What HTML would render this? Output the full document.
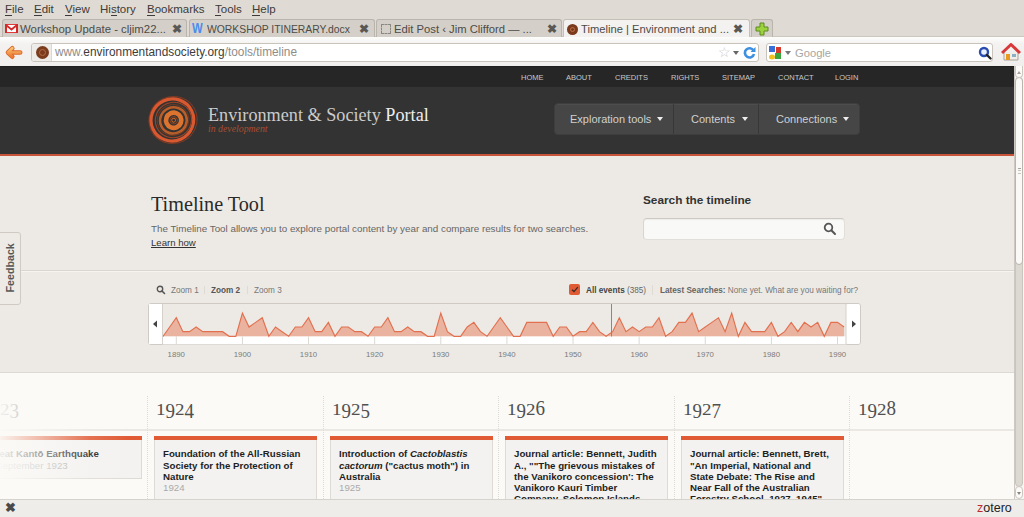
<!DOCTYPE html>
<html><head><meta charset="utf-8">
<style>
*{margin:0;padding:0;box-sizing:border-box}
html,body{width:1024px;height:517px;overflow:hidden;background:#f0efed;font-family:"Liberation Sans",sans-serif}
.a{position:absolute}
.t{position:absolute;white-space:nowrap;line-height:1}
/* chrome */
#menubar{left:0;top:0;width:1024px;height:20px;background:#e0dad4}
#menubar span{position:absolute;top:3px;font-size:11.5px;color:#3c3b37}
#menubar u{text-decoration:none;border-bottom:1px solid #3c3b37}
#tabbar{left:0;top:20px;width:1024px;height:17px;background:#e0dad4}
.tab{position:absolute;top:19px;height:18px;background:#d4d0c9;border:1px solid #b9b4ac;border-bottom:none;border-radius:3px 3px 0 0}
.tab.act{background:#f3f2f0;height:19px;border-color:#c4bfb7}
.tab .lbl{position:absolute;left:17px;top:3px;font-size:11px;color:#4c4b47;white-space:nowrap}
.tab .x{position:absolute;top:2px;font-size:12px;color:#5a5855;font-weight:bold}
#navbar{left:0;top:37px;width:1024px;height:29px;background:linear-gradient(#fbfbfa 0px,#f3f2f0 6px,#f0efed 29px);border-top:1px solid #fcfcfb}
</style></head><body>
<div id="menubar" class="a">
 <span style="left:5px"><u>F</u>ile</span>
 <span style="left:34px"><u>E</u>dit</span>
 <span style="left:65px"><u>V</u>iew</span>
 <span style="left:100px">Hi<u>s</u>tory</span>
 <span style="left:147px"><u>B</u>ookmarks</span>
 <span style="left:215px"><u>T</u>ools</span>
 <span style="left:252px"><u>H</u>elp</span>
</div>

<div id="tabbar" class="a"><div class="a" style="left:0;top:16px;width:1024px;height:1px;background:#ccc7bf"></div></div>
<!-- tab1 -->
<div class="tab" style="left:2px;width:185px">
 <svg class="a" style="left:2px;top:4px" width="13" height="9" viewBox="0 0 13 9"><rect x="0.5" y="0.5" width="12" height="8" fill="#fff" stroke="#e03a3a"/><path d="M1 1 L6.5 5.5 L12 1" fill="none" stroke="#d42a2a" stroke-width="1.8"/><rect x="0" y="0" width="2" height="9" fill="#d42a2a"/><rect x="11" y="0" width="2" height="9" fill="#d42a2a"/></svg>
 <span class="lbl" style="font-size:11.4px">Workshop Update - cljim22...</span><span class="x" style="left:169px">&#10006;</span>
</div>
<div class="tab" style="left:189px;width:186px">
 <span class="a" style="left:2px;top:1px;font:bold 14.5px/1 'Liberation Sans',sans-serif;color:#4a8cf0;transform:scaleX(0.78);transform-origin:left">W</span>
 <span class="lbl" style="transform:scaleX(0.943);transform-origin:left">WORKSHOP ITINERARY.docx</span><span class="x" style="left:169px">&#10006;</span>
</div>
<div class="tab" style="left:376px;width:186px">
 <div class="a" style="left:4px;top:4px;width:10px;height:10px;border:1px dashed #8a8680;border-radius:1px"></div>
 <span class="lbl" style="font-size:11.25px">Edit Post &#8249; Jim Clifford &#8212; ...</span><span class="x" style="left:170px">&#10006;</span>
</div>
<div class="tab act" style="left:563px;width:187px">
 <div class="a" style="left:3px;top:4px;width:11px;height:11px;border-radius:50%;background:#7a3a1c"><div class="a" style="left:3px;top:3px;width:5px;height:5px;border-radius:50%;border:1px solid #c0704a"></div></div>
 <span class="lbl" style="font-size:11.2px">Timeline | Environment and ...</span><span class="x" style="left:169px">&#10006;</span>
</div>
<div class="tab" style="left:751px;width:22px">
 <svg class="a" style="left:3px;top:2px" width="14" height="14" viewBox="0 0 14 14"><path d="M5 1H9V5H13V9H9V13H5V9H1V5H5Z" fill="#9cd33c" stroke="#5c8a1e" stroke-width="1"/></svg>
</div>
<div id="navbar" class="a">
 <svg class="a" style="left:3px;top:6px" width="22" height="16" viewBox="0 0 22 16"><defs><linearGradient id="ag" x1="0" y1="0" x2="0" y2="1"><stop offset="0" stop-color="#f8c070"/><stop offset="1" stop-color="#ec7a30"/></linearGradient></defs><path d="M9.3 4.3 L5 8.5 L9.3 12.7 M5.5 8.5 L17.2 8.5" fill="none" stroke="#dc6a2a" stroke-width="4.6" stroke-linecap="round" stroke-linejoin="round"/><path d="M9.3 4.3 L5 8.5 L9.3 12.7 M5.5 8.5 L17.2 8.5" fill="none" stroke="url(#ag)" stroke-width="2.7" stroke-linecap="round" stroke-linejoin="round"/></svg>
 <div class="a" style="left:31px;top:5px;width:728px;height:19px;background:#fff;border:1px solid #c8c3bb;border-radius:3px">
  <div class="a" style="left:0;top:0;width:20px;height:17px;background:#eeece9;border-right:1px solid #dcd8d2;border-radius:2px 0 0 2px"></div>
  <div class="a" style="left:4px;top:2px;width:13px;height:13px;border-radius:50%;background:#7b3c1e"><div class="a" style="left:3px;top:3px;width:7px;height:7px;border-radius:50%;border:1px solid #b86a44"></div></div>
  <span class="t" style="left:23px;top:3px;font-size:11.85px;color:#8f8d89">www.<span style="color:#3c3c3c">environmentandsociety.org</span>/tools/timeline</span>
  <span class="t" style="left:686px;top:1px;font-size:14px;color:#c9c9c9">&#9734;</span>
  <div class="a" style="left:701px;top:7px;width:0;height:0;border-left:3px solid transparent;border-right:3px solid transparent;border-top:4px solid #666"></div>
  <svg class="a" style="left:711px;top:2px" width="13" height="13" viewBox="0 0 13 13"><path d="M10.5 4.5 A4.6 4.6 0 1 0 11 8" fill="none" stroke="#3d8fe0" stroke-width="2.6"/><path d="M12.5 1 L12.5 6 L7.5 6 Z" fill="#3d8fe0"/></svg>
 </div>
 <div class="a" style="left:766px;top:5px;width:227px;height:19px;background:#fff;border:1px solid #c8c3bb;border-radius:3px">
  <svg class="a" style="left:2px;top:2px" width="13" height="14" viewBox="0 0 13 14"><rect x="0" y="0" width="6" height="6" fill="#3a6fd8"/><rect x="7" y="1" width="5" height="6" fill="#d83a2a"/><rect x="6" y="7" width="6" height="6" fill="#3ca43c"/><ellipse cx="3" cy="11" rx="3" ry="2.5" fill="#f0c020"/></svg>
  <div class="a" style="left:18px;top:7px;width:0;height:0;border-left:3px solid transparent;border-right:3px solid transparent;border-top:4px solid #777"></div>
  <span class="t" style="left:28px;top:3.5px;font-size:11.2px;color:#a8a6a2">Google</span>
  <svg class="a" style="left:211px;top:2px" width="14" height="14" viewBox="0 0 14 14"><circle cx="6" cy="6" r="4" fill="#e8f0ff" stroke="#2a4cb0" stroke-width="2.4"/><path d="M9 9 L12.5 12.5" stroke="#222" stroke-width="2.4" stroke-linecap="round"/></svg>
 </div>
 <svg class="a" style="left:1001px;top:5px" width="20" height="18" viewBox="0 0 20 18"><path d="M3 9 V17 H17 V9" fill="#f2efe8" stroke="#a8a29a" stroke-width="1"/><path d="M1 10 L10 1.5 L19 10" fill="none" stroke="#d8383a" stroke-width="3" stroke-linejoin="round"/><rect x="5" y="11" width="4" height="6" fill="#e89a20"/><rect x="11" y="11" width="4" height="3" fill="#8ab0c8"/></svg>
</div>


<!-- page -->
<div class="a" style="left:0;top:66px;width:1014px;height:21px;background:#262626;border-top:1px solid #1e1e1e"></div>
<div class="a" style="left:0;top:87px;width:1014px;height:67px;background:#333333"></div>
<div class="a" style="left:0;top:154px;width:1014px;height:2px;background:#c8553a"></div>
<div class="a" style="left:0;top:156px;width:1014px;height:216px;background:#edeae5"></div>
<div class="a" style="left:0;top:372px;width:1014px;height:127px;background:#fbfaf7;border-top:1px solid #dddad5"></div>

<!-- top nav links -->
<div class="t" style="left:521px;top:74px;font-size:7.5px;color:#c8c8c8;letter-spacing:0">HOME</div>
<div class="t" style="left:566px;top:74px;font-size:7.5px;color:#c8c8c8">ABOUT</div>
<div class="t" style="left:615px;top:74px;font-size:7.5px;color:#c8c8c8">CREDITS</div>
<div class="t" style="left:671px;top:74px;font-size:7.5px;color:#c8c8c8">RIGHTS</div>
<div class="t" style="left:722px;top:74px;font-size:7.5px;color:#c8c8c8">SITEMAP</div>
<div class="t" style="left:778px;top:74px;font-size:7.5px;color:#c8c8c8">CONTACT</div>
<div class="t" style="left:835px;top:74px;font-size:7.5px;color:#c8c8c8">LOGIN</div>
<!-- logo -->
<svg class="a" style="left:146px;top:93px" width="54" height="54" viewBox="-27 -27 54 54">
 <g transform="rotate(-25)">
 <ellipse cx="0" cy="0" rx="24.2" ry="23.4" fill="none" stroke="#7e3a24" stroke-width="1"/>
 <ellipse cx="-0.6" cy="-0.3" rx="21.4" ry="21" fill="none" stroke="#d9582f" stroke-width="3.2"/>
 <ellipse cx="0.4" cy="0.2" rx="18.2" ry="17.6" fill="none" stroke="#9c4526" stroke-width="1.1"/>
 <ellipse cx="0" cy="0" rx="16" ry="15.5" fill="none" stroke="#7a3a20" stroke-width="0.8"/>
 <ellipse cx="0.2" cy="0.5" rx="13.4" ry="13" fill="none" stroke="#b85e2a" stroke-width="2.6"/>
 <circle cx="0.5" cy="0.5" r="7.6" fill="none" stroke="#dc7430" stroke-width="4.6"/>
 <circle cx="0.5" cy="0.5" r="3.6" fill="none" stroke="#8c4222" stroke-width="0.9"/>
 <circle cx="0.5" cy="0.5" r="1.9" fill="none" stroke="#c8652a" stroke-width="0.9"/>
 </g>
</svg>
<div class="t" style="left:208px;top:105px;font:18.2px 'Liberation Serif',serif;color:#cbcbcb">Environment &amp; Society <span style="color:#ededed">Portal</span></div>
<div class="t" style="left:208px;top:122.5px;font:italic 9.8px 'Liberation Serif',serif;color:#a84e30">in development</div>
<!-- nav buttons -->
<div class="a" style="left:554px;top:103px;width:306px;height:32px;background:#464646;border:1px solid #3e3e3e;border-radius:4px;box-shadow:inset 0 1px 0 rgba(255,255,255,0.04)">
 <div class="a" style="left:118px;top:0;width:1px;height:30px;background:#383838"></div>
 <div class="a" style="left:203px;top:0;width:1px;height:30px;background:#383838"></div>
</div>
<div class="t" style="left:570px;top:114px;font-size:11px;color:#d0d0d0">Exploration tools</div>
<div class="a" style="left:657px;top:117px;border-left:3px solid transparent;border-right:3px solid transparent;border-top:4px solid #eee"></div>
<div class="t" style="left:691px;top:114px;font-size:11px;color:#d0d0d0">Contents</div>
<div class="a" style="left:742px;top:117px;border-left:3px solid transparent;border-right:3px solid transparent;border-top:4px solid #eee"></div>
<div class="t" style="left:776px;top:114px;font-size:11px;color:#d0d0d0">Connections</div>
<div class="a" style="left:843px;top:117px;border-left:3px solid transparent;border-right:3px solid transparent;border-top:4px solid #eee"></div>

<!-- feedback -->
<div class="a" style="left:-3px;top:232px;width:24px;height:73px;background:#eeebe6;border:1px solid #cfcbc4;border-radius:0 3px 3px 0;z-index:5"></div>
<div class="t" style="left:-15px;top:262px;width:49px;transform:rotate(-90deg);font:bold 10.7px 'Liberation Sans',sans-serif;color:#585858;z-index:6">Feedback</div>
<!-- title -->
<div class="t" style="left:151px;top:192.5px;font:20.2px 'Liberation Serif',serif;color:#2a2a2a">Timeline Tool</div>
<div class="t" style="left:151px;top:223.5px;font-size:9.82px;color:#666">The Timeline Tool allows you to explore portal content by year and compare results for two searches.</div>
<div class="t" style="left:151px;top:238px;font-size:9.6px;color:#333;text-decoration:underline">Learn how</div>
<div class="t" style="left:643px;top:192.5px;font:bold 11.8px 'Liberation Sans',sans-serif;color:#333">Search the timeline</div>
<div class="a" style="left:643px;top:218px;width:202px;height:22px;background:#f9f9f8;border:1px solid #e2dfda;border-top-color:#cdc9c2;border-left-color:#d8d4ce;border-radius:4px;box-shadow:inset 0 1px 1px rgba(0,0,0,0.05)"></div>
<svg class="a" style="left:823px;top:222px" width="14" height="14" viewBox="0 0 14 14"><circle cx="5.5" cy="5.5" r="3.8" fill="none" stroke="#555" stroke-width="1.8"/><path d="M8.3 8.3 L12 12" stroke="#555" stroke-width="2" stroke-linecap="round"/></svg>
<!-- hr -->
<div class="a" style="left:0;top:270px;width:1014px;height:1px;background:#d9d6d1"></div><div class="a" style="left:0;top:271px;width:1014px;height:1px;background:#f6f4f0"></div>
<!-- zoom row -->
<svg class="a" style="left:156px;top:285px" width="10" height="10" viewBox="0 0 10 10"><circle cx="4" cy="4" r="2.7" fill="none" stroke="#555" stroke-width="1.4"/><path d="M6 6 L8.5 8.5" stroke="#555" stroke-width="1.6" stroke-linecap="round"/></svg>
<div class="t" style="left:171px;top:287px;font-size:8.2px;color:#777">Zoom 1</div>
<div class="a" style="left:204px;top:286px;width:1px;height:8px;background:#dedad4"></div>
<div class="t" style="left:211px;top:287px;font-size:8.2px;font-weight:bold;color:#555">Zoom 2</div>
<div class="a" style="left:247px;top:286px;width:1px;height:8px;background:#dedad4"></div>
<div class="t" style="left:254px;top:287px;font-size:8.2px;color:#777">Zoom 3</div>
<div class="a" style="left:569px;top:284px;width:11px;height:11px;background:#e05a34;border-radius:2px"></div>
<svg class="a" style="left:571px;top:286px" width="8" height="7" viewBox="0 0 8 7"><path d="M1 3.8 L3 5.6 L6.8 1.2" fill="none" stroke="#3a2a24" stroke-width="1.3"/></svg>
<div class="t" style="left:586px;top:286px;font:bold 8.2px 'Liberation Sans',sans-serif;color:#444">All events <span style="font-weight:normal;color:#666">(385)</span></div>
<div class="a" style="left:652px;top:285px;width:1px;height:10px;background:#dedad4"></div>
<div class="t" style="left:660px;top:286px;font:bold 8.2px 'Liberation Sans',sans-serif;color:#666">Latest Searches: <span style="font-weight:normal;color:#777">None yet. What are you waiting for?</span></div>
<!-- chart -->
<div class="a" style="left:148px;top:303px;width:713px;height:42px;background:#edeae5;border:1px solid #cfcbc4;border-radius:3px"></div>
<svg class="a" style="left:148px;top:303px" width="713" height="42" viewBox="0 0 713 42">
 <defs><clipPath id="cc"><rect x="14.5" y="1" width="683.5" height="40"/></clipPath></defs>
 <rect x="14.5" y="33.3" width="684" height="8" fill="#fff"/>
 <g clip-path="url(#cc)"><polygon points="8.46,33.30 8.46,28.66 15.08,33.30 21.69,24.02 28.30,14.74 34.91,28.66 41.52,28.66 48.14,24.02 54.75,28.66 61.36,28.66 67.97,28.66 74.58,28.66 81.20,33.30 87.81,33.30 94.42,10.10 101.03,24.02 107.64,19.38 114.26,14.74 120.87,33.30 127.48,24.02 134.09,28.66 140.70,33.30 147.32,24.02 153.93,24.02 160.54,14.74 167.15,28.66 173.76,28.66 180.38,19.38 186.99,33.30 193.60,24.02 200.21,24.02 206.82,28.66 213.44,28.66 220.05,33.30 226.66,24.02 233.27,24.02 239.88,14.74 246.50,28.66 253.11,28.66 259.72,24.02 266.33,28.66 272.94,28.66 279.56,33.30 286.17,33.30 292.78,10.10 299.39,28.66 306.00,33.30 312.62,33.30 319.23,24.02 325.84,19.38 332.45,28.66 339.06,33.30 345.68,24.02 352.29,14.74 358.90,24.02 365.51,33.30 372.12,33.30 378.74,19.38 385.35,19.38 391.96,19.38 398.57,19.38 405.18,33.30 411.80,24.02 418.41,24.02 425.02,33.30 431.63,28.66 438.24,28.66 444.86,19.38 451.47,28.66 458.08,33.30 464.69,28.66 471.30,14.74 477.92,28.66 484.53,24.02 491.14,28.66 497.75,24.02 504.36,24.02 510.98,14.74 517.59,33.30 524.20,28.66 530.81,19.38 537.42,19.38 544.04,10.10 550.65,28.66 557.26,24.02 563.87,19.38 570.48,14.74 577.10,28.66 583.71,10.10 590.32,33.30 596.93,19.38 603.54,28.66 610.16,28.66 616.77,28.66 623.38,19.38 629.99,33.30 636.60,28.66 643.22,19.38 649.83,28.66 656.44,19.38 663.05,24.02 669.66,19.38 676.28,33.30 682.89,19.38 689.50,19.38 696.11,24.02 696.11,33.30" fill="#eab3a0"/><polyline points="8.46,28.66 15.08,33.30 21.69,24.02 28.30,14.74 34.91,28.66 41.52,28.66 48.14,24.02 54.75,28.66 61.36,28.66 67.97,28.66 74.58,28.66 81.20,33.30 87.81,33.30 94.42,10.10 101.03,24.02 107.64,19.38 114.26,14.74 120.87,33.30 127.48,24.02 134.09,28.66 140.70,33.30 147.32,24.02 153.93,24.02 160.54,14.74 167.15,28.66 173.76,28.66 180.38,19.38 186.99,33.30 193.60,24.02 200.21,24.02 206.82,28.66 213.44,28.66 220.05,33.30 226.66,24.02 233.27,24.02 239.88,14.74 246.50,28.66 253.11,28.66 259.72,24.02 266.33,28.66 272.94,28.66 279.56,33.30 286.17,33.30 292.78,10.10 299.39,28.66 306.00,33.30 312.62,33.30 319.23,24.02 325.84,19.38 332.45,28.66 339.06,33.30 345.68,24.02 352.29,14.74 358.90,24.02 365.51,33.30 372.12,33.30 378.74,19.38 385.35,19.38 391.96,19.38 398.57,19.38 405.18,33.30 411.80,24.02 418.41,24.02 425.02,33.30 431.63,28.66 438.24,28.66 444.86,19.38 451.47,28.66 458.08,33.30 464.69,28.66 471.30,14.74 477.92,28.66 484.53,24.02 491.14,28.66 497.75,24.02 504.36,24.02 510.98,14.74 517.59,33.30 524.20,28.66 530.81,19.38 537.42,19.38 544.04,10.10 550.65,28.66 557.26,24.02 563.87,19.38 570.48,14.74 577.10,28.66 583.71,10.10 590.32,33.30 596.93,19.38 603.54,28.66 610.16,28.66 616.77,28.66 623.38,19.38 629.99,33.30 636.60,28.66 643.22,19.38 649.83,28.66 656.44,19.38 663.05,24.02 669.66,19.38 676.28,33.30 682.89,19.38 689.50,19.38 696.11,24.02" fill="none" stroke="#e2704f" stroke-width="1.15" stroke-linejoin="miter"/><rect x="27.80" y="33.3" width="1" height="8" fill="#dcd8d2"/><rect x="93.92" y="33.3" width="1" height="8" fill="#dcd8d2"/><rect x="160.04" y="33.3" width="1" height="8" fill="#dcd8d2"/><rect x="226.16" y="33.3" width="1" height="8" fill="#dcd8d2"/><rect x="292.28" y="33.3" width="1" height="8" fill="#dcd8d2"/><rect x="358.40" y="33.3" width="1" height="8" fill="#dcd8d2"/><rect x="424.52" y="33.3" width="1" height="8" fill="#dcd8d2"/><rect x="490.64" y="33.3" width="1" height="8" fill="#dcd8d2"/><rect x="556.76" y="33.3" width="1" height="8" fill="#dcd8d2"/><rect x="622.88" y="33.3" width="1" height="8" fill="#dcd8d2"/><rect x="689.00" y="33.3" width="1" height="8" fill="#dcd8d2"/></g>
 <rect x="463" y="1" width="1" height="32.5" fill="#8a8884"/>
 <rect x="1" y="1" width="13.5" height="40" fill="#fff"/>
 <rect x="14" y="1" width="1" height="40" fill="#d6d2cb"/>
 <path d="M9 17.5 L5 21 L9 24.5 Z" fill="#444"/>
 <rect x="698" y="1" width="14" height="40" rx="2" fill="#fff"/>
 <rect x="697.5" y="1" width="1" height="40" fill="#d6d2cb"/>
 <path d="M704 17.5 L708 21 L704 24.5 Z" fill="#444"/>
</svg>
<div class="t" style="left:167.30px;top:351px;width:18px;text-align:center;font-size:7.8px;color:#7a7a7a">1890</div>
<div class="t" style="left:233.42px;top:351px;width:18px;text-align:center;font-size:7.8px;color:#7a7a7a">1900</div>
<div class="t" style="left:299.54px;top:351px;width:18px;text-align:center;font-size:7.8px;color:#7a7a7a">1910</div>
<div class="t" style="left:365.66px;top:351px;width:18px;text-align:center;font-size:7.8px;color:#7a7a7a">1920</div>
<div class="t" style="left:431.78px;top:351px;width:18px;text-align:center;font-size:7.8px;color:#7a7a7a">1930</div>
<div class="t" style="left:497.90px;top:351px;width:18px;text-align:center;font-size:7.8px;color:#7a7a7a">1940</div>
<div class="t" style="left:564.02px;top:351px;width:18px;text-align:center;font-size:7.8px;color:#7a7a7a">1950</div>
<div class="t" style="left:630.14px;top:351px;width:18px;text-align:center;font-size:7.8px;color:#7a7a7a">1960</div>
<div class="t" style="left:696.26px;top:351px;width:18px;text-align:center;font-size:7.8px;color:#7a7a7a">1970</div>
<div class="t" style="left:762.38px;top:351px;width:18px;text-align:center;font-size:7.8px;color:#7a7a7a">1980</div>
<div class="t" style="left:828.50px;top:351px;width:18px;text-align:center;font-size:7.8px;color:#7a7a7a">1990</div>
<div class="a" style="left:1014px;top:66px;width:10px;height:433px;background:#f7f6f3;border-left:1px solid #cdc9c2"></div>
<div class="a" style="left:1015px;top:77px;width:8px;height:410px;background:#dcd8d2;border:1px solid #c9c4bc;border-radius:4px"></div>
<div class="a" style="left:1015px;top:77px;width:8px;height:188px;background:#faf9f7;border:1px solid #b9b4ac;border-radius:4px"></div>
<div class="a" style="left:1015px;top:66px;width:8px;height:12px;background:#fcfbfa;border:1px solid #cbc6be;border-top:none;border-radius:0 0 4px 4px"></div>
<div class="a" style="left:1017px;top:71px;border-left:2.5px solid transparent;border-right:2.5px solid transparent;border-bottom:3px solid #a6a29b"></div>
<div class="a" style="left:1018px;top:168px;width:3px;height:1px;background:#a9a59e"></div>
<div class="a" style="left:1018px;top:170px;width:3px;height:1px;background:#c9c5be"></div>
<div class="a" style="left:1018px;top:173px;width:3px;height:1px;background:#c9c5be"></div>
<div class="a" style="left:1015px;top:486px;width:8px;height:13px;background:#fcfbfa;border:1px solid #cbc6be;border-radius:4px"></div>
<div class="a" style="left:1017px;top:492px;border-left:2.5px solid transparent;border-right:2.5px solid transparent;border-top:3px solid #8a867f"></div>
<!-- columns -->
<div class="a" style="left:0;top:429px;width:1014px;height:2px;background:#ebe8e3"></div>
<div class="t" style="left:-19px;top:401.5px;font:19px/19px 'Liberation Serif',serif;color:#505050"><span style="display:inline-block;transform:translateY(-3px) scaleY(0.85);transform-origin:50% 17px">1</span><span style="display:inline-block;transform:scaleY(1.07);transform-origin:50% 17px">9</span><span style="display:inline-block;transform:translateY(-3px) scaleY(0.85);transform-origin:50% 17px">2</span><span style="display:inline-block;transform:scaleY(1.07);transform-origin:50% 17px">3</span></div>
<div class="a" style="left:147px;top:396px;width:0;height:103px;border-left:1px dotted #dedbd6"></div>
<div class="t" style="left:156px;top:401.5px;font:19px/19px 'Liberation Serif',serif;color:#505050"><span style="display:inline-block;transform:translateY(-3px) scaleY(0.85);transform-origin:50% 17px">1</span><span style="display:inline-block;transform:scaleY(1.07);transform-origin:50% 17px">9</span><span style="display:inline-block;transform:translateY(-3px) scaleY(0.85);transform-origin:50% 17px">2</span><span style="display:inline-block;transform:scaleY(1.07);transform-origin:50% 17px">4</span></div>
<div class="a" style="left:323px;top:396px;width:0;height:103px;border-left:1px dotted #dedbd6"></div>
<div class="t" style="left:332px;top:401.5px;font:19px/19px 'Liberation Serif',serif;color:#505050"><span style="display:inline-block;transform:translateY(-3px) scaleY(0.85);transform-origin:50% 17px">1</span><span style="display:inline-block;transform:scaleY(1.07);transform-origin:50% 17px">9</span><span style="display:inline-block;transform:translateY(-3px) scaleY(0.85);transform-origin:50% 17px">2</span><span style="display:inline-block;transform:scaleY(1.07);transform-origin:50% 17px">5</span></div>
<div class="a" style="left:498px;top:396px;width:0;height:103px;border-left:1px dotted #dedbd6"></div>
<div class="t" style="left:507px;top:401.5px;font:19px/19px 'Liberation Serif',serif;color:#505050"><span style="display:inline-block;transform:translateY(-3px) scaleY(0.85);transform-origin:50% 17px">1</span><span style="display:inline-block;transform:scaleY(1.07);transform-origin:50% 17px">9</span><span style="display:inline-block;transform:translateY(-3px) scaleY(0.85);transform-origin:50% 17px">2</span><span style="display:inline-block;transform:translateY(-3px) scaleY(1.12);transform-origin:50% 17px">6</span></div>
<div class="a" style="left:674px;top:396px;width:0;height:103px;border-left:1px dotted #dedbd6"></div>
<div class="t" style="left:683px;top:401.5px;font:19px/19px 'Liberation Serif',serif;color:#505050"><span style="display:inline-block;transform:translateY(-3px) scaleY(0.85);transform-origin:50% 17px">1</span><span style="display:inline-block;transform:scaleY(1.07);transform-origin:50% 17px">9</span><span style="display:inline-block;transform:translateY(-3px) scaleY(0.85);transform-origin:50% 17px">2</span><span style="display:inline-block;transform:scaleY(1.07);transform-origin:50% 17px">7</span></div>
<div class="a" style="left:849px;top:396px;width:0;height:103px;border-left:1px dotted #dedbd6"></div>
<div class="t" style="left:858px;top:401.5px;font:19px/19px 'Liberation Serif',serif;color:#505050"><span style="display:inline-block;transform:translateY(-3px) scaleY(0.85);transform-origin:50% 17px">1</span><span style="display:inline-block;transform:scaleY(1.07);transform-origin:50% 17px">9</span><span style="display:inline-block;transform:translateY(-3px) scaleY(0.85);transform-origin:50% 17px">2</span><span style="display:inline-block;transform:translateY(-3px) scaleY(1.12);transform-origin:50% 17px">8</span></div>
<div class="a" style="left:-21px;top:440px;width:163px;height:39px;background:#f3f2f0;border:1px solid #dedbd6;border-top:none"></div><div class="a" style="left:-21px;top:436px;width:163px;height:4px;background:#e05a34"></div>
<div class="a" style="left:-12px;top:448.3px;width:150px;font-size:9.7px;line-height:11.2px;color:#1e1e1e;white-space:nowrap"><b>Great Kant&#333; Earthquake</b><div style="font-weight:normal;color:#aaa">1 September 1923</div></div>
<div class="a" style="left:154px;top:440px;width:163px;height:76px;background:#f3f2f0;border:1px solid #dedbd6;border-top:none"></div><div class="a" style="left:154px;top:436px;width:163px;height:4px;background:#e05a34"></div>
<div class="a" style="left:163px;top:448.3px;width:150px;font-size:9.7px;line-height:11.2px;color:#1e1e1e;white-space:nowrap"><b>Foundation of the All-Russian<br>Society for the Protection of<br>Nature</b><div style="font-weight:normal;color:#aaa">1924</div></div>
<div class="a" style="left:330px;top:440px;width:163px;height:76px;background:#f3f2f0;border:1px solid #dedbd6;border-top:none"></div><div class="a" style="left:330px;top:436px;width:163px;height:4px;background:#e05a34"></div>
<div class="a" style="left:339px;top:448.3px;width:150px;font-size:9.7px;line-height:11.2px;color:#1e1e1e;white-space:nowrap"><b>Introduction of <i>Cactoblastis</i><br><i>cactorum</i> ("cactus moth") in<br>Australia</b><div style="font-weight:normal;color:#aaa">1925</div></div>
<div class="a" style="left:505px;top:440px;width:163px;height:76px;background:#f3f2f0;border:1px solid #dedbd6;border-top:none"></div><div class="a" style="left:505px;top:436px;width:163px;height:4px;background:#e05a34"></div>
<div class="a" style="left:514px;top:448.3px;width:150px;font-size:9.7px;line-height:11.2px;color:#1e1e1e;white-space:nowrap"><b>Journal article: Bennett, Judith<br>A., ""The grievous mistakes of<br>the Vanikoro concession': The<br>Vanikoro Kauri Timber<br>Company, Solomon Islands,</b><div style="font-weight:normal;color:#aaa">1926</div></div>
<div class="a" style="left:681px;top:440px;width:163px;height:76px;background:#f3f2f0;border:1px solid #dedbd6;border-top:none"></div><div class="a" style="left:681px;top:436px;width:163px;height:4px;background:#e05a34"></div>
<div class="a" style="left:690px;top:448.3px;width:150px;font-size:9.7px;line-height:11.2px;color:#1e1e1e;white-space:nowrap"><b>Journal article: Bennett, Brett,<br>"An Imperial, National and<br>State Debate: The Rise and<br>Near Fall of the Australian<br>Forestry School, 1927&#8211;1945"</b><div style="font-weight:normal;color:#aaa">1927</div></div>
<div class="a" style="left:0;top:373px;width:150px;height:126px;background:linear-gradient(to right,rgba(251,250,247,0.95) 0px,rgba(251,250,247,0.6) 40px,rgba(251,250,247,0.15) 90px,rgba(251,250,247,0) 130px)"></div>
<div class="a" style="left:0;top:499px;width:1024px;height:18px;background:#efedea;border-top:1px solid #d6d2cc"></div>
<div class="t" style="left:5px;top:502px;font-size:12.5px;font-weight:bold;color:#4a4a4a">&#10006;</div>
<div class="t" style="left:977px;top:502px;font-size:12.5px;color:#222"><span style="color:#c02a2a">z</span>otero</div>
</body></html>
